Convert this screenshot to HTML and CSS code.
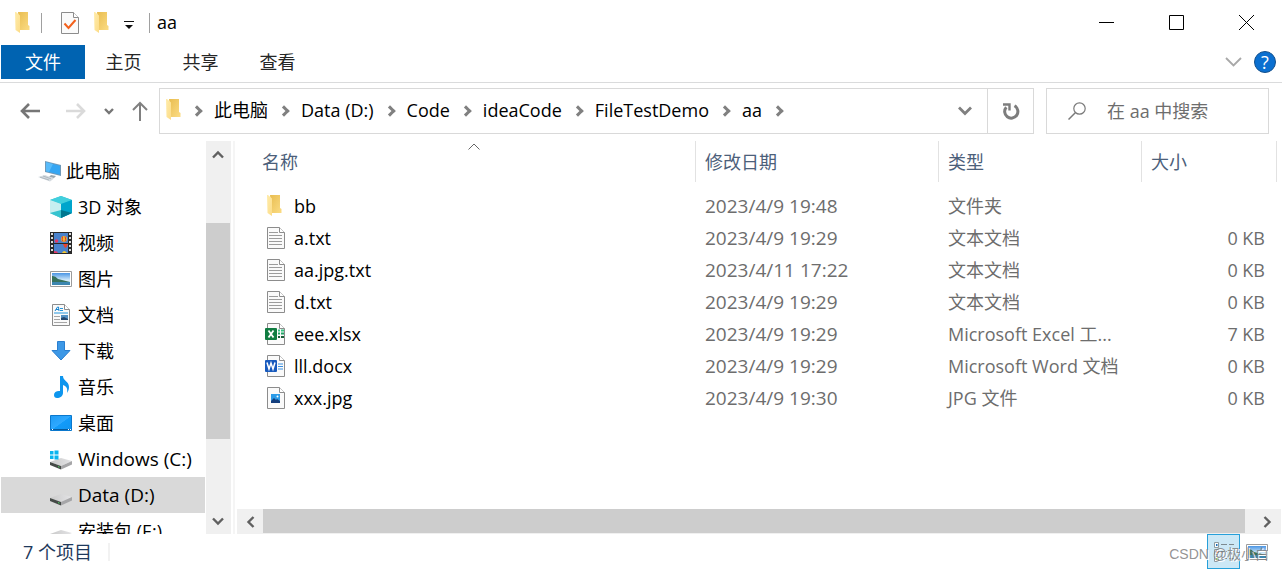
FILE: index.html
```html
<!DOCTYPE html>
<html lang="zh-CN">
<head>
<meta charset="utf-8">
<title>aa</title>
<link rel="stylesheet" href="styles.css">
</head>
<body>
<svg class="defs" aria-hidden="true">
  <defs>
    <linearGradient id="gFlap" x1="0" y1="0" x2="1" y2="1"><stop offset="0" stop-color="#ffecab"/><stop offset="1" stop-color="#fcdc88"/></linearGradient>
    <linearGradient id="gBack" x1="0" y1="0" x2="1" y2="1"><stop offset="0" stop-color="#e9bd50"/><stop offset="1" stop-color="#fbdc84"/></linearGradient>
    <linearGradient id="gBlue" x1="0" y1="0" x2="1" y2="1"><stop offset="0" stop-color="#1e9bf5"/><stop offset=".5" stop-color="#2fa9ff"/><stop offset=".52" stop-color="#129bfa"/><stop offset="1" stop-color="#1194f0"/></linearGradient>
    <linearGradient id="gDrive" x1="0" y1="0" x2="1" y2="0"><stop offset="0" stop-color="#c9c9c9"/><stop offset="1" stop-color="#e4e4e6"/></linearGradient>
    <linearGradient id="gSky" x1="0" y1="0" x2="0" y2="1"><stop offset="0" stop-color="#4a95e4"/><stop offset=".6" stop-color="#d4ebfa"/><stop offset="1" stop-color="#bfe0ee"/></linearGradient>
    <symbol id="folder" viewBox="0 0 15 22">
      <path d="M3 0h10v13l1.500 1v4H5z" fill="url(#gBack)"/>
      <path d="M0 0h1l4 3.500V21L.500 18z" fill="url(#gFlap)"/>
    </symbol>
    <symbol id="page" viewBox="0 0 18 22">
      <path d="M.500.500h12l5 5v16H.500z" fill="#fafafa" stroke="#8c8c8c"/>
      <path d="M12.500.500v5h5" fill="#fff" stroke="#8c8c8c"/>
    </symbol>
    <symbol id="text" viewBox="0 0 18 22">
      <use href="#page" width="18" height="22"/>
      <path d="M2 5.500h9M2 8.500h13M2 11.500h13M2 14.500h13M2 17.500h13" stroke="#9c9c9c" stroke-width="1.200"/>
    </symbol>
    <symbol id="photo" viewBox="0 0 22 22">
      <path d="M.500 3.500h21v15H.500z" fill="#fff" stroke="#9c9c9c"/>
      <path d="M2 5h18v12H2z" fill="url(#gSky)"/>
      <path d="M2 8q3-.500 6 3l12 3v1H2z" fill="#36715c"/>
      <path d="M2 14h18v3H2z" fill="#3c86b0"/>
    </symbol>
  </defs>
</svg>

<div class="window">
  <header class="titlebar">
    <svg class="ic-folder"><use href="#folder"/></svg>
    <span class="sep sep-a"></span>
    <button class="plain" aria-label="属性">
      <svg class="ic-page" viewBox="0 0 18 22"><use href="#page"/><path d="M3.500 11.500l4 4.500 7-8" fill="none" stroke="#f2601b" stroke-width="2"/></svg>
    </button>
    <button class="plain" aria-label="新建文件夹"><svg class="ic-folder"><use href="#folder"/></svg></button>
    <button class="plain" aria-label="自定义快速访问工具栏">
      <svg class="ic-drop" viewBox="0 0 10 10"><path d="M0 1.500h10" stroke="#111"/><path d="M1 5h8L5 9z" fill="#111"/></svg>
    </button>
    <span class="sep sep-b"></span>
    <h1 class="title">aa</h1>
    <div class="winbtns">
      <button class="winbtn" aria-label="最小化"><svg viewBox="0 0 15 15"><path d="M0 7.500h15"/></svg></button>
      <button class="winbtn" aria-label="最大化"><svg viewBox="0 0 15 15"><path d="M.500.500h14v14H.500z"/></svg></button>
      <button class="winbtn" aria-label="关闭"><svg viewBox="0 0 15 15"><path d="M0 0l15 15M15 0L0 15"/></svg></button>
    </div>
  </header>

  <nav class="tabs" aria-label="功能区">
    <button class="tab tab-file">文件</button>
    <button class="tab">主页</button>
    <button class="tab">共享</button>
    <button class="tab">查看</button>
    <button class="plain expand" aria-label="展开功能区"><svg class="ic-expand" viewBox="0 0 16 10"><path d="M.500 1L8 8.500 15.500 1" fill="none" stroke="#a8a8a8" stroke-width="1.800"/></svg></button>
    <button class="help" aria-label="帮助">?</button>
  </nav>

  <div class="navbar">
    <div class="history">
      <button class="plain" aria-label="后退"><svg class="ic-arrow" viewBox="0 0 20 16"><path d="M20 8H2M9 1L2 8l7 7" fill="none" stroke="#767676" stroke-width="2.600"/></svg></button>
      <button class="plain fwd" aria-label="前进"><svg class="ic-arrow" viewBox="0 0 20 16"><path d="M0 8h18M11 1l7 7-7 7" fill="none" stroke="#dadada" stroke-width="2.600"/></svg></button>
      <button class="plain recent" aria-label="最近位置"><svg class="ic-recent" viewBox="0 0 10 7"><path d="M1 1l4 4 4-4" fill="none" stroke="#767676" stroke-width="2.400"/></svg></button>
      <button class="plain up" aria-label="上移"><svg class="ic-up" viewBox="0 0 16 20"><path d="M8 20V2M1 9l7-7 7 7" fill="none" stroke="#808080" stroke-width="2"/></svg></button>
    </div>
    <div class="address">
      <svg class="ic-folder"><use href="#folder"/></svg>
      <ol class="crumbs">
        <li><a href="#pc">此电脑</a></li>
        <li><a href="#d">Data (D:)</a></li>
        <li><a href="#code">Code</a></li>
        <li><a href="#idea">ideaCode</a></li>
        <li><a href="#demo">FileTestDemo</a></li>
        <li><a href="#aa">aa</a></li>
        <li></li>
      </ol>
      <button class="plain addr-drop" aria-label="历史记录"><svg viewBox="0 0 14 10"><path d="M1 1.500l6 6 6-6" fill="none" stroke="#808080" stroke-width="2.800"/></svg></button>
      <button class="plain refresh" aria-label="刷新"><svg viewBox="0 0 18 18"><path d="M4.300 5.200A6.600 6.600 0 1 0 12.500 3.800" fill="none" stroke="#7d7d7d" stroke-width="3"/><path d="M1 2.500h6.500v6" fill="none" stroke="#7d7d7d" stroke-width="2.400"/></svg></button>
    </div>
    <label class="search">
      <svg viewBox="0 0 18 18"><circle cx="11.500" cy="6.500" r="5.700" fill="none" stroke="#7a7a7a" stroke-width="1.200"/><path d="M7.500 10.500L.500 17.500" stroke="#7a7a7a" stroke-width="1.500"/></svg>
      <input type="text" placeholder="在 aa 中搜索" aria-label="搜索">
    </label>
  </div>

  <div class="main">
    <nav class="tree" aria-label="导航窗格">
      <a class="node root" href="#pc"><svg viewBox="0 0 24 22"><path d="M7 1l16 4v11L7 12z" fill="#6f99b8"/><path d="M8 2.200l14 3.500v9L8 11.200z" fill="#35a6f3"/><path d="M8 2.200l7 1.900-4 7.900-3-.800z" fill="#58bbfa"/><path d="M13 15l5 1-2 2-5-1z" fill="#9ba8b0"/><path d="M0 17l7-2 9 3.500-4 3z" fill="#d5dbe0"/><path d="M2 17.200l9 2.800M5 16l8 2.800" stroke="#a5b0b8" stroke-width=".8"/></svg><span>此电脑</span></a>
      <a class="node" href="#3d"><svg viewBox="0 0 22 22"><path d="M0 4l11-4 11 4v13l-11 5-11-5z" fill="#2bbfd2"/><path d="M0 4l11 4v14L0 17z" fill="#8fe0e4"/><path d="M0 4l11-4 11 4-11 4z" fill="#42cfdd"/><path d="M0 4l11 4v7L0 17z" fill="#c7eff0"/><path d="M11 8l11-4v13l-11 5z" fill="#00a5cc"/><path d="M0 17l11-3v8z" fill="#36c3cf"/><path d="M11 14l11 3-11 5z" fill="#00778f"/></svg><span>3D 对象</span></a>
      <a class="node" href="#video"><svg viewBox="0 0 22 22"><path d="M0 0h22v22H0z" fill="#292929"/><path d="M4 1h14v10H4zM4 12h14v9H4z" fill="#4a82cb"/><path d="M1 1h2v2H1zm0 4h2v2H1zm0 4h2v2H1zm0 4h2v2H1zm0 4h2v2H1zM19 1h2v2h-2zm0 4h2v2h-2zm0 4h2v2h-2zm0 4h2v2h-2zm0 4h2v2h-2z" fill="#ddd"/><circle cx="14" cy="7" r="3" fill="#f2b82b"/><path d="M12.500 4.500q-1 3 .500 5M15 4.500q1.500 3 0 5" stroke="#cf3043" fill="none"/><circle cx="6.500" cy="9" r="1.800" fill="#e13a68"/><path d="M13 12h5q-1 3-2.500 4-1.500-1-2.500-4" fill="#e8452e"/><path d="M4 19l3 .500 1 1.500H4z" fill="#e13a68"/><path d="M12 21q2-4 5 0z" fill="#f5c530"/></svg><span>视频</span></a>
      <a class="node" href="#pics"><svg><use href="#photo"/></svg><span>图片</span></a>
      <a class="node" href="#docs"><svg viewBox="0 0 22 22"><use href="#page" x="2" width="18" height="22"/><path d="M5 7l2.500-4h1L9 7M6 5.500h3" stroke="#1684cf" fill="none"/><path d="M10 4.500h3M10 6.500h3M4 9h14" stroke="#2596dc" stroke-width="1.200"/><path d="M4 12.500h6M4 15.500h6M4 18.500h13" stroke="#a6a6a6"/><path d="M11 11h7v5h-7z" fill="#5391c4"/><path d="M11 16v-2l3-1 4 2v1z" fill="#24476e"/></svg><span>文档</span></a>
      <a class="node" href="#dl"><svg viewBox="0 0 22 22"><path d="M7.500 1.500h7v9h5.500l-9 9.500-9-9.500h5.500z" fill="#3d98e6" stroke="#2a7fd0"/></svg><span>下载</span></a>
      <a class="node" href="#music"><svg viewBox="0 0 22 22"><path d="M10 0h3c0 5 6 5 6 11 0 3-1 4-2 6 1-5-1-7-4-8v8c0 3-3 5-6 5-2 0-3-1-3-3 0-3 3-4.500 6-4z" fill="#0e96ee"/></svg><span>音乐</span></a>
      <a class="node" href="#desk"><svg viewBox="0 0 22 22"><path d="M.500 3.500h21v15H.500z" fill="url(#gBlue)" stroke="#0b78cd"/><path d="M1 17.500h20" stroke="#07599b"/><path d="M2 17.500h1M18 17.500h1M20 17.500h1" stroke="#fff"/></svg><span>桌面</span></a>
      <a class="node" href="#c"><svg viewBox="0 0 22 22"><path d="M0 14l11-4 11 3-11 5z" fill="url(#gDrive)"/><path d="M0 14l11 4v3.500L0 17z" fill="#454a47"/><path d="M11 18l11-5v3.500l-11 5z" fill="#a6a6a8"/><path d="M8 18.500l1.500.700" stroke="#49d55e"/><path d="M0 3h3.500v3.500H0zm4.500-.500h4v4h-4zM0 7.500h3.500V11H0zm4.500 0h4v4h-4z" fill="#0bb5ef"/></svg><span class="latin">Windows (C:)</span></a>
      <a class="node selected" href="#d" aria-current="true"><svg viewBox="0 0 22 22"><path d="M0 14l11-4 11 3-11 5z" fill="url(#gDrive)"/><path d="M0 14l11 4v3.500L0 17z" fill="#454a47"/><path d="M11 18l11-5v3.500l-11 5z" fill="#a6a6a8"/><path d="M8 18.500l1.500.700" stroke="#49d55e"/></svg><span class="latin">Data (D:)</span></a>
      <a class="node" href="#e"><svg viewBox="0 0 22 22"><path d="M0 14l11-4 11 3-11 5z" fill="url(#gDrive)"/><path d="M0 14l11 4v3.500L0 17z" fill="#454a47"/></svg><span>安装包 (E:)</span></a>
    </nav>
    <div class="vscroll">
      <button class="plain sbtn" aria-label="向上滚动"><svg viewBox="0 0 12 9"><path d="M1 7.500l5-5 5 5"/></svg></button>
      <div class="vthumb"></div>
      <div class="vrest"></div>
      <button class="plain sbtn" aria-label="向下滚动"><svg viewBox="0 0 12 9"><path d="M1 1.500l5 5 5-5"/></svg></button>
    </div>

    <section class="pane">
      <div class="list">
        <table class="files">
          <colgroup><col><col class="c-date"><col class="c-type"><col class="c-size"></colgroup>
          <thead>
            <tr><th scope="col" aria-sort="ascending">名称<svg class="sort" viewBox="0 0 12 7"><path d="M.500 6.500L6 1l5.500 5.500" fill="none" stroke="#666"/></svg></th><th scope="col">修改日期</th><th scope="col">类型</th><th scope="col">大小</th></tr>
          </thead>
          <tbody>
            <tr><td><span class="file"><svg viewBox="0 0 20 22"><use href="#folder" x="2" width="15" height="22"/></svg>bb</span></td><td class="latin">2023/4/9 19:48</td><td>文件夹</td><td></td></tr>
            <tr><td><span class="file"><svg viewBox="0 0 20 22"><use href="#text" x="2" width="18" height="22"/></svg>a.txt</span></td><td class="latin">2023/4/9 19:29</td><td>文本文档</td><td>0 KB</td></tr>
            <tr><td><span class="file"><svg viewBox="0 0 20 22"><use href="#text" x="2" width="18" height="22"/></svg>aa.jpg.txt</span></td><td class="latin">2023/4/11 17:22</td><td>文本文档</td><td>0 KB</td></tr>
            <tr><td><span class="file"><svg viewBox="0 0 20 22"><use href="#text" x="2" width="18" height="22"/></svg>d.txt</span></td><td class="latin">2023/4/9 19:29</td><td>文本文档</td><td>0 KB</td></tr>
            <tr><td><span class="file"><svg viewBox="0 0 20 22"><use href="#page" x="2" width="18" height="22"/><path d="M13 7.500h2M16 7.500h3" stroke="#35c481" stroke-width="2"/><path d="M13 10.500h2M16 10.500h3" stroke="#21a366" stroke-width="2"/><path d="M13 14h2M16 14h3" stroke="#185c37" stroke-width="2"/><rect y="5" width="12" height="12" rx="1" fill="#107c41"/><path d="M3.500 7.500l5 7M8.500 7.500l-5 7" stroke="#fff" stroke-width="1.800"/></svg>eee.xlsx</span></td><td class="latin">2023/4/9 19:29</td><td>Microsoft Excel 工...</td><td>7 KB</td></tr>
            <tr><td><span class="file"><svg viewBox="0 0 20 22"><use href="#page" x="2" width="18" height="22"/><path d="M13 9h5M13 11.500h5M13 14h5" stroke="#3a8fe0" stroke-width="1.200"/><rect y="5" width="12" height="12" rx="1" fill="#185abd"/><path d="M2 7.500l2 6.500 2-6 2 6 2-6.500" fill="none" stroke="#fff" stroke-width="1.500"/></svg>lll.docx</span></td><td class="latin">2023/4/9 19:29</td><td>Microsoft Word 文档</td><td>0 KB</td></tr>
            <tr><td><span class="file"><svg viewBox="0 0 20 22"><use href="#page" x="2" width="18" height="22"/><path d="M6 7h9v9H6z" fill="#2b9be8"/><path d="M6 16v-2l3-3 2 2 1-1 3 2v2z" fill="#133d7c"/><circle cx="12.500" cy="9.500" r="1" fill="#fff"/></svg>xxx.jpg</span></td><td class="latin">2023/4/9 19:30</td><td>JPG 文件</td><td>0 KB</td></tr>
          </tbody>
        </table>
      </div>
      <div class="hscroll">
        <button class="plain hbtn" aria-label="向左滚动"><svg viewBox="0 0 9 12"><path d="M7.500 1l-5 5 5 5"/></svg></button>
        <div class="hthumb"></div>
        <button class="plain hbtn hright" aria-label="向右滚动"><svg viewBox="0 0 9 12"><path d="M1.500 1l5 5-5 5"/></svg></button>
      </div>
    </section>
  </div>

  <footer class="status">
    <span class="count">7 个项目</span>
    <div class="views">
      <button class="plain view on" aria-label="详细信息"><svg viewBox="0 0 22 22"><path d="M1.500 1.500h4v5h-4zM1.500 8.500h4v5h-4zM1.500 15.500h4v5h-4z" fill="#fff" stroke="#8f9a9f"/><path d="M3 4h1.500" stroke="#1e6fb8" stroke-width="2"/><path d="M3 11h1.500" stroke="#d42" stroke-width="2"/><path d="M3 18h1.500" stroke="#3a3" stroke-width="2"/><path d="M8 3.500h6M16 3.500h5M8 10.500h6M16 10.500h5M8 17.500h6M16 17.500h5" stroke="#7d8a90"/></svg></button>
      <button class="plain view" aria-label="大缩略图"><svg><use href="#photo"/></svg></button>
    </div>
    <span class="watermark">CSDN @极小白</span>
  </footer>
</div>
</body>
</html>
```
FILE: styles.css
```css
*, *::before { box-sizing: border-box; }

body {
  margin: 0;
  font: 18px/24px "Open Sans", "Noto Sans CJK SC", sans-serif;
  color: #000;
  background: #fff;
}

.defs { position: absolute; width: 0; height: 0; }
svg { display: block; flex: none; }
button { font: inherit; color: inherit; }
a { color: inherit; text-decoration: none; }
.latin { font-size: 19px; }

.plain {
  display: flex;
  align-items: center;
  justify-content: center;
  padding: 0;
  border: 0;
  background: none;
}

.window { display: flex; flex-direction: column; height: 100vh; min-height: 400px; overflow: hidden; }

/* title bar */
.titlebar { display: flex; align-items: center; height: 45px; padding: 0 1px 0 15px; flex: none; }
.ic-folder { width: 15px; height: 22px; }
.ic-page { width: 18px; height: 22px; }
.ic-drop { width: 10px; height: 10px; margin-top: 4px; }
.titlebar .plain { margin-right: 15px; }
.sep { width: 1px; height: 20px; background: #a0a0a0; }
.sep-a { margin: 0 19px 0 11px; }
.sep-b { margin-right: 7px; }
.title { margin: 0; padding-bottom: 2px; font-size: 18px; font-weight: 400; }
.winbtns { display: flex; margin-left: auto; }
.winbtn {
  display: flex;
  align-items: center;
  justify-content: center;
  width: 70px;
  height: 45px;
  padding: 0;
  border: 0;
  background: none;
}
.winbtn svg { width: 15px; height: 15px; fill: none; stroke: #000; stroke-width: 1; }

/* ribbon tabs */
.tabs {
  display: flex;
  align-items: center;
  height: 38px;
  flex: none;
  padding: 0 6px 3px 1px;
  border-bottom: 1px solid #dadbdc;
}
.tab { width: 77px; height: 34px; padding: 0; border: 0; background: none; color: #262626; }
.tab-file { width: 84px; color: #fff; background: #0063b1; }
.expand { margin-left: auto; }
.ic-expand { width: 17px; height: 10px; }
.help {
  width: 22px;
  height: 22px;
  margin-left: 12px;
  padding: 0;
  border: 1px solid #14508c;
  border-radius: 50%;
  background: #0a6fd0;
  color: #fff;
  font-size: 18px;
  line-height: 20px;
}

/* navigation row */
.navbar { display: flex; height: 51px; flex: none; padding: 5px 13px 0 20px; }
.history { display: flex; align-items: center; width: 139px; }
.ic-arrow { width: 20px; height: 16px; }
.ic-recent { width: 10px; height: 7px; }
.ic-up { width: 16px; height: 20px; }
.fwd { margin-left: 26px; }
.recent { margin-left: 18px; }
.up { margin-left: 18px; }
.address { display: flex; align-items: center; flex: 1; height: 46px; padding-left: 6px; border: 1px solid #d9d9d9; }
.address > .ic-folder { margin-bottom: 2px; }
.crumbs { display: flex; flex: 1; margin: 0; padding: 0 0 2px; list-style: none; }
.crumbs li { display: flex; align-items: center; padding-left: 12px; }
.crumbs li::before {
  content: "";
  width: 8px;
  height: 8px;
  margin: 2px 13px 0 0;
  border: solid #808080;
  border-width: 3px 3px 0 0;
  transform: rotate(45deg);
}
.addr-drop { width: 44px; }
.addr-drop svg { width: 14px; height: 10px; }
.refresh { width: 46px; height: 44px; border-left: 1px solid #d9d9d9; }
.refresh svg { width: 18px; height: 18px; }
.search { display: flex; align-items: center; width: 223px; height: 46px; margin-left: 12px; padding-left: 21px; border: 1px solid #d9d9d9; }
.search svg { width: 18px; height: 18px; }
.search input { flex: 1; min-width: 0; margin-left: 21px; padding: 0; border: 0; outline: 0; font: inherit; background: none; }
.search input::placeholder { color: #6d6d6d; opacity: 1; }

/* tree */
.main { display: flex; flex: 1; min-height: 0; padding-top: 7px; }
.tree { width: 205px; flex: none; padding: 12px 0 0 1px; overflow: hidden; }
.node { display: flex; align-items: center; gap: 6px; height: 36px; padding-left: 49px; white-space: nowrap; }
.node svg { width: 22px; height: 22px; }
.root { padding-left: 37px; gap: 4px; }
.root svg { width: 24px; }
.selected { background: #d9d9d9; }

.vscroll { display: flex; flex-direction: column; width: 25px; flex: none; margin-left: 1px; background: #f0f0f0; }
.sbtn { height: 26px; width: 24px; flex: none; }
.sbtn svg { width: 12px; height: 9px; }
.sbtn path, .hbtn path { fill: none; stroke: #606060; stroke-width: 2.4; }
.vthumb { flex: 216; margin: 56px 1px 0 0; background: #cdcdcd; }
.vrest { flex: 69; }

/* file list */
.pane { display: flex; flex-direction: column; flex: 1; min-width: 0; margin-left: 2px; border-left: 2px solid #f5f5f5; }
.list { flex: 1; min-height: 0; padding: 0 5px 0 18px; overflow: hidden; }
.files { width: 100%; table-layout: fixed; border-collapse: separate; border-spacing: 0; }
.c-date { width: 243px; }
.c-type { width: 203px; }
.c-size { width: 135px; }
th {
  position: relative;
  height: 41px;
  padding: 0 9px;
  border-right: 1px solid #e2e2e2;
  color: #4c607a;
  font-weight: 400;
  text-align: left;
}
.sort { position: absolute; top: 2px; left: calc(50% - 6px); width: 12px; height: 7px; }
tbody::before { content: ""; display: block; height: 8px; }
td { height: 32px; padding: 0 9px; color: #6d6d6d; white-space: nowrap; }
td:first-child { padding-left: 12px; color: #000; }
td:last-child { padding-right: 12px; text-align: right; }
.file { display: flex; align-items: center; gap: 9px; }
.file svg { width: 20px; height: 22px; }

.hscroll { display: flex; height: 25px; flex: none; margin: 0 1px 0 2px; background: #f0f0f0; }
.hbtn { width: 26px; }
.hbtn svg { width: 9px; height: 12px; }
.hthumb { flex: 1; height: 24px; background: #cdcdcd; }
.hright { width: 36px; padding-left: 8px; }

/* status bar */
.status { position: relative; display: flex; align-items: center; height: 36px; flex: none; padding: 0 14px 0 23px; color: #1e395b; }
.count { padding-right: 16px; border-right: 2px solid #f2f2f2; line-height: 18px; }
.views { display: flex; gap: 6px; align-self: stretch; margin-left: auto; }
.view svg { width: 22px; height: 22px; }
.on { width: 33px; height: 35px; border: 1px solid #26a0da; background: #cce8f6; }
.watermark {
  position: absolute;
  right: 13px;
  bottom: 6px;
  color: rgb(120 120 120 / 80%);
  font: 14px/20px "Liberation Sans", "Noto Sans CJK SC", sans-serif;
  text-shadow: 1px 1px 0 #fff;
}
```
